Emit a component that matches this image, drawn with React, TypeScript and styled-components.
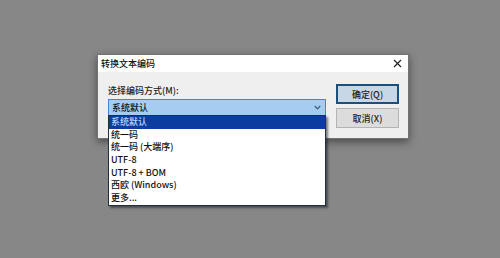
import React from "react";
import styled, { createGlobalStyle } from "styled-components";

const Global = createGlobalStyle`
  html, body { margin: 0; padding: 0; background: #878787; }
  body { font-family: "Noto Sans CJK SC", "Noto Sans", sans-serif; }
`;

const Page = styled.div`
  width: 500px;
  height: 258px;
  box-sizing: border-box;
  padding: 54px 0 0 97px;
  background: #878787;
`;

const Dialog = styled.div`
  width: 312px;
  box-sizing: border-box;
  border: 1px solid #6f7478;
  box-shadow: 0 3px 8px rgba(0, 0, 0, 0.45);
  display: flex;
  flex-direction: column;
`;

const TitleBar = styled.div`
  height: 17px;
  background: #ffffff;
  display: flex;
  align-items: center;
  justify-content: space-between;
  padding: 0 6px 0 3px;
`;

const Title = styled.span`
  font-size: 9px;
  color: #111;
  font-weight: 500;
`;

const Body = styled.div`
  height: 66px;
  background: #efefef;
  display: flex;
  padding: 12px 0 0 10px;
  box-sizing: border-box;
`;

const LeftCol = styled.div`
  width: 218px;
  display: flex;
  flex-direction: column;
`;

const Label = styled.div`
  font-size: 9px;
  font-weight: 500;
  color: #222;
  height: 15px;
  line-height: 13px;
  margin-bottom: 0px;
`;

const Combo = styled.div`
  position: relative;
  height: 17px;
  box-sizing: border-box;
  border: 1px solid #3c8ad4;
  background: #a5cdf2;
  display: flex;
  align-items: center;
  justify-content: space-between;
  padding: 0 4px 0 3px;
  font-size: 9px;
  font-weight: 500;
  color: #111;
`;

const List = styled.div`
  position: absolute;
  top: 100%;
  left: -1px;
  width: 218px;
  box-sizing: border-box;
  background: #ffffff;
  border: 1px solid #23303b;
  box-shadow: 2px 2px 2px rgba(20, 30, 40, 0.55);
  display: flex;
  flex-direction: column;
  z-index: 2;
`;

const Item = styled.div<{ $selected?: boolean }>`
  height: 12.7px;
  line-height: 12.7px;
  padding-left: 2px;
  font-size: 9px;
  font-weight: 500;
  white-space: nowrap;
  color: ${(p) => (p.$selected ? "#bcd6ff" : "#111")};
  background: ${(p) => (p.$selected ? "#0b3c9e" : "transparent")};
`;

const RightCol = styled.div`
  margin-left: 10px;
  display: flex;
  flex-direction: column;
  gap: 4px;
`;

const Button = styled.div<{ $primary?: boolean }>`
  width: 63px;
  height: 20px;
  box-sizing: border-box;
  display: flex;
  align-items: center;
  justify-content: center;
  font-size: 9px;
  font-weight: 500;
  color: #222;
  background: ${(p) => (p.$primary ? "#c7d7e6" : "#dcdcdc")};
  border: ${(p) => (p.$primary ? "2px solid #1d4f7d" : "1px solid #b4b4b4")};
`;

const Chevron = () => (
  <svg width="7" height="5" viewBox="0 0 7 5">
    <path d="M0.8 1 L3.5 3.8 L6.2 1" fill="none" stroke="#3d5873" strokeWidth="1.2" />
  </svg>
);

const CloseIcon = () => (
  <svg width="9" height="9" viewBox="0 0 9 9">
    <path d="M1 1 L8 8 M8 1 L1 8" stroke="#222" strokeWidth="1.2" />
  </svg>
);

const items = [
  "系统默认",
  "统一码",
  "统一码 (大端序)",
  "UTF-8",
  "UTF-8 + BOM",
  "西欧 (Windows)",
  "更多...",
];

export default function App() {
  return (
    <>
      <Global />
      <Page>
        <Dialog>
          <TitleBar>
            <Title>转换文本编码</Title>
            <CloseIcon />
          </TitleBar>
          <Body>
            <LeftCol>
              <Label>选择编码方式(M):</Label>
              <Combo>
                <span>系统默认</span>
                <Chevron />
                <List>
                  {items.map((t, i) => (
                    <Item key={t} $selected={i === 0}>
                      {t}
                    </Item>
                  ))}
                </List>
              </Combo>
            </LeftCol>
            <RightCol>
              <Button $primary>确定(Q)</Button>
              <Button>取消(X)</Button>
            </RightCol>
          </Body>
        </Dialog>
      </Page>
    </>
  );
}
